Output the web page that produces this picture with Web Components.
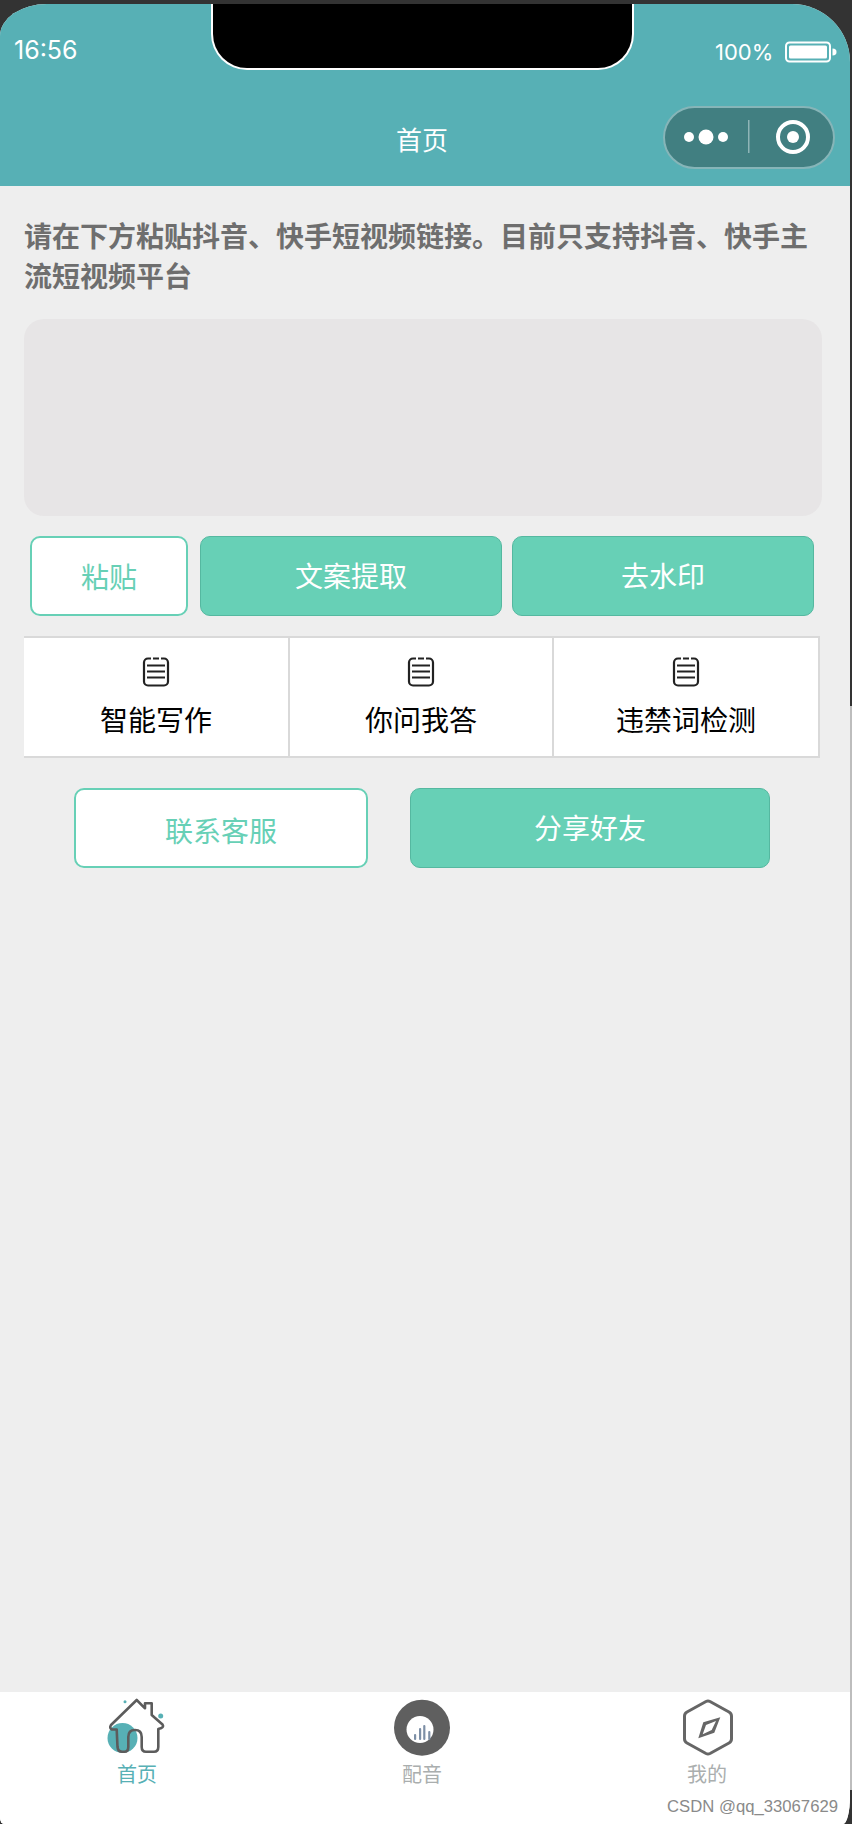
<!DOCTYPE html>
<html lang="zh">
<head>
<meta charset="utf-8">
<title>首页</title>
<style>
    html, body { margin: 0; height: 100%; }
    html { background: linear-gradient(#333 706px, #bdbdbd 706px, #bdbdbd 1790px, #333 1790px); }
    body { font-family: "Liberation Sans", "Noto Sans CJK SC", sans-serif; overflow: hidden; }
</style>
</head>
<body>
<phone-shell>
    <status-bar slot="top" time="16:56" battery="100%"></status-bar>
    <nav-bar slot="top">首页</nav-bar>

    <p-intro>请在下方粘贴抖音、快手短视频链接。目前只支持抖音、快手主流短视频平台</p-intro>
    <paste-box></paste-box>

    <button-row style="--row-pad: 6px; --row-gap: 12px; --row-top: 20px">
        <app-button outline style="width: 158px">粘贴</app-button>
        <app-button style="width: 302px">文案提取</app-button>
        <app-button style="width: 302px; margin-left: -2px">去水印</app-button>
    </button-row>

    <feature-grid>
        <feature-cell>智能写作</feature-cell>
        <feature-cell>你问我答</feature-cell>
        <feature-cell>违禁词检测</feature-cell>
    </feature-grid>

    <button-row style="--row-pad: 50px; --row-gap: 42px; --row-top: 30px">
        <app-button outline style="width: 294px; padding-top: 3px">联系客服</app-button>
        <app-button style="width: 360px">分享好友</app-button>
    </button-row>

    <tab-bar slot="bottom">
        <tab-item icon="home" active>首页</tab-item>
        <tab-item icon="voice">配音</tab-item>
        <tab-item icon="mine">我的</tab-item>
    </tab-bar>
    <span slot="mark">CSDN @qq_33067629</span>
</phone-shell>

<script>
function shadow(el, html) {
    el.attachShadow({mode: 'open'}).innerHTML = html;
}

class PhoneShell extends HTMLElement {
    constructor() {
        super();
        shadow(this, `
            <style>
                :host { display: block; height: 1820px; padding-top: 4px; }
                .screen {
                    width: 850px;
                    height: 1820px;
                    display: flex;
                    flex-direction: column;
                    background: #eeeeee;
                    overflow: hidden;
                    border-radius: 47px 58px 7px 4px / 32px 58px 27px 6px;
                }
                main { flex: 1; padding: 0 24px; min-height: 0; }
                .bottom { position: relative; }
                .mark {
                    position: absolute;
                    right: 12px;
                    bottom: 8px;
                    font-size: 16.700px;
                    line-height: 18px;
                    color: #8a8a8a;
                }
            </style>
            <div class="screen">
                <slot name="top"></slot>
                <main><slot></slot></main>
                <div class="bottom">
                    <slot name="bottom"></slot>
                    <div class="mark"><slot name="mark"></slot></div>
                </div>
            </div>
        `);
    }
}

class StatusBar extends HTMLElement {
    connectedCallback() {
        shadow(this, `
            <style>
                :host {
                    display: grid;
                    grid-template-columns: 211px 423px 1fr;
                    height: 66px;
                    background: #57b0b5;
                    color: #fff;
                    font-family: Inter, sans-serif;
                }
                .time { font-size: 25px; padding: 30px 0 0 14px; line-height: 32px; }
                .notch {
                    box-sizing: border-box;
                    background: #000;
                    border: 2px solid #fff;
                    border-top: 0;
                    border-radius: 0 0 36px 36px;
                }
                .power { display: flex; align-items: flex-start; gap: 12px; padding: 33px 0 0 81px; }
                .pct { font-size: 22px; line-height: 30px; }
                svg { margin-top: 4px; }
            </style>
            <div class="time">${this.getAttribute('time')}</div>
            <div class="notch"></div>
            <div class="power">
                <span class="pct">${this.getAttribute('battery')}</span>
                <svg width="52" height="22" viewBox="0 0 52 22">
                    <rect x="1" y="1.500" width="44" height="19" rx="3.500" fill="none" stroke="#fff" stroke-width="2"/>
                    <rect x="4" y="4.500" width="38" height="13" rx="1.500" fill="#fff"/>
                    <path d="M47.500 7.500c3 0 4 1.500 4 3.500s-1 3.500-4 3.500z" fill="#fff"/>
                </svg>
            </div>
        `);
    }
}

class NavBar extends HTMLElement {
    constructor() {
        super();
        shadow(this, `
            <style>
                :host {
                    display: grid;
                    grid-template-columns: 1fr auto 1fr;
                    align-items: start;
                    height: 116px;
                    background: #57b0b5;
                    color: #fff;
                }
                .title { font-size: 26px; line-height: 36px; padding: 53px 6px 0 0; }
                .capsule {
                    justify-self: end;
                    margin: 36px 15px 0 0;
                    width: 172px;
                    height: 63px;
                    display: block;
                }
            </style>
            <span></span>
            <div class="title"><slot></slot></div>
            <svg class="capsule" viewBox="0 0 172 63">
                <rect x="1" y="1" width="170" height="61" rx="30.500" fill="#417f81" stroke="#86b5b8" stroke-width="2"/>
                <circle cx="26" cy="31" r="5" fill="#fff"/>
                <circle cx="43" cy="31" r="7.500" fill="#fff"/>
                <circle cx="60" cy="31" r="5" fill="#fff"/>
                <rect x="85" y="14" width="1.500" height="33" fill="#8fb5b7"/>
                <circle cx="130" cy="31" r="15" fill="none" stroke="#fff" stroke-width="4"/>
                <circle cx="130" cy="31" r="6" fill="#fff"/>
            </svg>
        `);
    }
}

class PIntro extends HTMLElement {
    constructor() {
        super();
        shadow(this, `
            <style>
                :host {
                    display: block;
                    padding: 32px 0 0;
                    font-size: 28px;
                    line-height: 40px;
                    font-weight: 700;
                    color: #6e6e6e;
                }
            </style>
            <slot></slot>
        `);
    }
}

class PasteBox extends HTMLElement {
    constructor() {
        super();
        shadow(this, `
            <style>
                :host {
                    display: block;
                    width: 798px;
                    height: 197px;
                    margin-top: 21px;
                    background: #e7e5e6;
                    border-radius: 20px;
                }
            </style>
        `);
    }
}

class ButtonRow extends HTMLElement {
    constructor() {
        super();
        shadow(this, `
            <style>
                :host {
                    display: flex;
                    gap: var(--row-gap);
                    padding-left: var(--row-pad);
                    padding-top: var(--row-top);
                }
            </style>
            <slot></slot>
        `);
    }
}

class AppButton extends HTMLElement {
    constructor() {
        super();
        shadow(this, `
            <style>
                :host {
                    display: flex;
                    align-items: center;
                    justify-content: center;
                    box-sizing: border-box;
                    height: 80px;
                    padding-bottom: 3px;
                    font-size: 28px;
                    color: #fff;
                    background: #67d0b6;
                    border: 1px solid #55b8a0;
                    border-radius: 10px;
                }
                :host([outline]) {
                    color: #67d0b6;
                    background: #fff;
                    border: 2px solid #67d0b6;
                    padding: 0;
                }
            </style>
            <slot></slot>
        `);
    }
}

class FeatureGrid extends HTMLElement {
    constructor() {
        super();
        shadow(this, `
            <style>
                :host {
                    display: grid;
                    grid-template-columns: 266px 264px 266px;
                    width: 796px;
                    margin-top: 20px;
                    background: #fff;
                    box-sizing: border-box;
                    height: 122px;
                    border-top: 2px solid #d9d9d9;
                    border-bottom: 2px solid #d9d9d9;
                }
            </style>
            <slot></slot>
        `);
    }
}

class FeatureCell extends HTMLElement {
    constructor() {
        super();
        shadow(this, `
            <style>
                :host {
                    display: flex;
                    flex-direction: column;
                    align-items: center;
                    box-sizing: border-box;
                    border-right: 2px solid #d9d9d9;
                    padding-top: 18px;
                    font-size: 28px;
                    line-height: 40px;
                    color: #000;
                }
                svg { display: block; margin-bottom: 14px; }
            </style>
            <svg width="28" height="32" viewBox="0 0 28 32" fill="none" stroke="#222">
                <rect x="2" y="2.500" width="24" height="27" rx="4" stroke-width="2.200"/>
                <path d="M5 9.500h18M5 15.500h18M5 21.500h18" stroke-width="2"/>
                <path d="M9 2.500h2M17 2.500h2" stroke="#fff" stroke-width="3"/>
            </svg>
            <slot></slot>
        `);
    }
}

class TabBar extends HTMLElement {
    constructor() {
        super();
        shadow(this, `
            <style>
                :host {
                    display: grid;
                    grid-template-columns: 274px 296px 274px;
                    height: 132px;
                    background: #fff;
                }
            </style>
            <slot></slot>
        `);
    }
}

const TAB_ICONS = {
    home: `
        <circle cx="23.500" cy="43" r="15" fill="#57b0b5"/>
        <circle cx="26" cy="6.700" r="1.500" fill="#57b0b5"/>
        <circle cx="61.700" cy="21" r="2.500" fill="#57b0b5"/>
        <path d="M37.700 5 L12 30 Q10 33 13 34.500 L17.700 34.500 L18.500 52 Q19 56.700 23 56.700 L25.500 56.700 Q29.300 56.700 29.300 52 L29.300 42 Q29.300 35 36 35 Q42.700 35 42.700 42 L42.700 52 Q42.700 56.700 47 56.700 L55 56.700 Q59.300 56.700 59.300 52 L59.300 34 L62.500 33 Q65 31.500 63.500 29.500 L52.700 20 L52.700 8.300 L46 8.300 L46 13.300 Z"
              fill="none" stroke="#5c5c5c" stroke-width="2.600" stroke-linejoin="round"/>`,
    voice: `
        <circle cx="38" cy="32.700" r="28" fill="#5f5f5f"/>
        <circle cx="36" cy="34.500" r="13.500" fill="#fff"/>
        <g fill="#7d8fa6">
            <rect x="30" y="39" width="2.200" height="6" rx="1"/>
            <rect x="35" y="33" width="2.200" height="12" rx="1"/>
            <rect x="39.200" y="30" width="2.200" height="15" rx="1"/>
            <rect x="44.200" y="36" width="2.200" height="9" rx="1"/>
        </g>`,
    mine: `
        <path d="M37 6.500 Q39 5.500 41 6.500 L60 17 Q62.500 18.500 62.500 21 L62.500 44 Q62.500 46.500 60 48 L41 58.500 Q39 59.500 37 58.500 L18 48 Q15.500 46.500 15.500 44 L15.500 21 Q15.500 18.500 18 17 Z"
              fill="none" stroke="#666" stroke-width="3" stroke-linejoin="round"/>
        <path d="M51.300 22.300 L34.300 27.300 L29.300 43.300 L45.300 37.700 Z M47 26 L37 30 L33.700 39.300 L42.700 35 Z" fill="#666" fill-rule="evenodd"/>`
};

class TabItem extends HTMLElement {
    connectedCallback() {
        shadow(this, `
            <style>
                :host {
                    display: flex;
                    flex-direction: column;
                    align-items: center;
                    padding-top: 3px;
                    font-size: 20px;
                    line-height: 30px;
                    color: #aaaeae;
                }
                :host([active]) { color: #57b0b5; }
                svg { display: block; margin-bottom: 1px; filter: blur(.6px); }
            </style>
            <svg width="76" height="64" viewBox="0 0 76 64">${TAB_ICONS[this.getAttribute('icon')]}</svg>
            <slot></slot>
        `);
    }
}

customElements.define('phone-shell', PhoneShell);
customElements.define('status-bar', StatusBar);
customElements.define('nav-bar', NavBar);
customElements.define('p-intro', PIntro);
customElements.define('paste-box', PasteBox);
customElements.define('button-row', ButtonRow);
customElements.define('app-button', AppButton);
customElements.define('feature-grid', FeatureGrid);
customElements.define('feature-cell', FeatureCell);
customElements.define('tab-bar', TabBar);
customElements.define('tab-item', TabItem);
</script>
</body>
</html>
